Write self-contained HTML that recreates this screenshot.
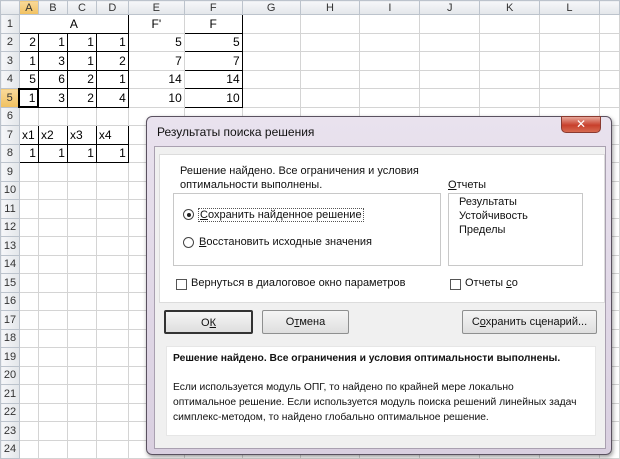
<!DOCTYPE html>
<html><head><meta charset="utf-8"><style>
*{box-sizing:border-box;margin:0;padding:0}
body{width:620px;height:459px;overflow:hidden;background:#fff;font-family:"Liberation Sans","DejaVu Sans",sans-serif;position:relative}
table{border-collapse:collapse;table-layout:fixed;position:absolute;left:0;top:0;font-size:12px}
td{border:1px solid #d4d4d4;height:18.5px;text-align:right;padding:0 2px;white-space:nowrap;overflow:hidden;line-height:16px}
tr.h td{background:linear-gradient(#f6f7f9,#e3e6ea);height:14px;text-align:center;color:#333;border-color:#bcc3cc;font-size:11px;line-height:12px}
td.r{background:linear-gradient(90deg,#f6f7f9,#e3e6ea);text-align:center;color:#333;border-color:#bcc3cc;font-size:11px}
td.sel{background:linear-gradient(#f9d99a,#f1c15f)!important}
.b{border:1px solid #000}
.l{text-align:left}
.c{text-align:center}
#dlg{position:absolute;left:146px;top:116px;width:466px;height:339px;border:1px solid #5a5160;border-radius:6px;background:linear-gradient(#e9e2ee,#d9cfe0);box-shadow:1px 2px 4px rgba(0,0,0,.4)}
#title{position:absolute;left:10px;top:8px;font-size:12px;color:#111}
#close{position:absolute;right:10px;top:-1px;width:40px;height:17px;border-radius:0 0 5px 5px;background:linear-gradient(#e8a79a,#c8402c 55%,#d66a50);border:1px solid #8a3a30;color:#fff;font-weight:bold;font-size:12px;text-align:center;line-height:15px}
#inner{position:absolute;left:7px;top:29px;width:452px;height:303px;background:#f0f0f0;border:1px solid #a9a0b0}
.panel{position:absolute;background:#fff;border:1px solid #dcdcdc}
.t{position:absolute;font-size:11px;color:#111;white-space:nowrap}
.box{position:absolute;border:1px solid #c8c8c8;background:#fff}
.btn{position:absolute;height:24px;border:1px solid #8e8f8f;border-radius:2px;background:linear-gradient(#f5f5f5,#dedede);font-size:11px;text-align:center;line-height:22px;color:#111}
.cb{position:absolute;width:11px;height:11px;border:1px solid #555;background:#fff}
.rd{position:absolute;width:11px;height:11px;border:1px solid #444;border-radius:50%;background:#fff}
</style></head><body>
<table>
<colgroup><col style="width:19px"><col style="width:19px"><col style="width:29px"><col style="width:29px"><col style="width:32px"><col style="width:56px"><col style="width:58px"><col style="width:58px"><col style="width:60px"><col style="width:60px"><col style="width:60px"><col style="width:60px"><col style="width:60px"><col style="width:20px"></colgroup>
<tr class="h"><td></td><td class="sel">A</td><td>B</td><td>C</td><td>D</td><td>E</td><td>F</td><td>G</td><td>H</td><td>I</td><td>J</td><td>K</td><td>L</td><td></td></tr>
<tr><td class="r">1</td><td colspan="4" class="b c">A</td><td class="c">F'</td><td class="b c">F</td><td></td><td></td><td></td><td></td><td></td><td></td><td></td></tr>
<tr><td class="r">2</td><td class="b">2</td><td class="b">1</td><td class="b">1</td><td class="b">1</td><td>5</td><td class="b">5</td><td></td><td></td><td></td><td></td><td></td><td></td><td></td></tr>
<tr><td class="r">3</td><td class="b">1</td><td class="b">3</td><td class="b">1</td><td class="b">2</td><td>7</td><td class="b">7</td><td></td><td></td><td></td><td></td><td></td><td></td><td></td></tr>
<tr><td class="r">4</td><td class="b">5</td><td class="b">6</td><td class="b">2</td><td class="b">1</td><td>14</td><td class="b">14</td><td></td><td></td><td></td><td></td><td></td><td></td><td></td></tr>
<tr><td class="r sel">5</td><td class="b" style="border-width:2px">1</td><td class="b">3</td><td class="b">2</td><td class="b">4</td><td>10</td><td class="b">10</td><td></td><td></td><td></td><td></td><td></td><td></td><td></td></tr>
<tr><td class="r">6</td><td></td><td></td><td></td><td></td><td></td><td></td><td></td><td></td><td></td><td></td><td></td><td></td><td></td></tr>
<tr><td class="r">7</td><td class="b l">x1</td><td class="b l">x2</td><td class="b l">x3</td><td class="b l">x4</td><td></td><td></td><td></td><td></td><td></td><td></td><td></td><td></td><td></td></tr>
<tr><td class="r">8</td><td class="b">1</td><td class="b">1</td><td class="b">1</td><td class="b">1</td><td></td><td></td><td></td><td></td><td></td><td></td><td></td><td></td><td></td></tr>
<tr><td class="r">9</td><td></td><td></td><td></td><td></td><td></td><td></td><td></td><td></td><td></td><td></td><td></td><td></td><td></td></tr>
<tr><td class="r">10</td><td></td><td></td><td></td><td></td><td></td><td></td><td></td><td></td><td></td><td></td><td></td><td></td><td></td></tr>
<tr><td class="r">11</td><td></td><td></td><td></td><td></td><td></td><td></td><td></td><td></td><td></td><td></td><td></td><td></td><td></td></tr>
<tr><td class="r">12</td><td></td><td></td><td></td><td></td><td></td><td></td><td></td><td></td><td></td><td></td><td></td><td></td><td></td></tr>
<tr><td class="r">13</td><td></td><td></td><td></td><td></td><td></td><td></td><td></td><td></td><td></td><td></td><td></td><td></td><td></td></tr>
<tr><td class="r">14</td><td></td><td></td><td></td><td></td><td></td><td></td><td></td><td></td><td></td><td></td><td></td><td></td><td></td></tr>
<tr><td class="r">15</td><td></td><td></td><td></td><td></td><td></td><td></td><td></td><td></td><td></td><td></td><td></td><td></td><td></td></tr>
<tr><td class="r">16</td><td></td><td></td><td></td><td></td><td></td><td></td><td></td><td></td><td></td><td></td><td></td><td></td><td></td></tr>
<tr><td class="r">17</td><td></td><td></td><td></td><td></td><td></td><td></td><td></td><td></td><td></td><td></td><td></td><td></td><td></td></tr>
<tr><td class="r">18</td><td></td><td></td><td></td><td></td><td></td><td></td><td></td><td></td><td></td><td></td><td></td><td></td><td></td></tr>
<tr><td class="r">19</td><td></td><td></td><td></td><td></td><td></td><td></td><td></td><td></td><td></td><td></td><td></td><td></td><td></td></tr>
<tr><td class="r">20</td><td></td><td></td><td></td><td></td><td></td><td></td><td></td><td></td><td></td><td></td><td></td><td></td><td></td></tr>
<tr><td class="r">21</td><td></td><td></td><td></td><td></td><td></td><td></td><td></td><td></td><td></td><td></td><td></td><td></td><td></td></tr>
<tr><td class="r">22</td><td></td><td></td><td></td><td></td><td></td><td></td><td></td><td></td><td></td><td></td><td></td><td></td><td></td></tr>
<tr><td class="r">23</td><td></td><td></td><td></td><td></td><td></td><td></td><td></td><td></td><td></td><td></td><td></td><td></td><td></td></tr>
<tr><td class="r">24</td><td></td><td></td><td></td><td></td><td></td><td></td><td></td><td></td><td></td><td></td><td></td><td></td><td></td></tr>
</table>

<div id="dlg">
<div id="title">Результаты поиска решения</div>
<div id="close">✕</div>
<div id="inner"></div>
<div class="panel" style="left:12px;top:37px;width:446px;height:149px"></div>
<div class="t" style="left:33px;top:48px">Решение найдено. Все ограничения и условия</div>
<div class="t" style="left:33px;top:62px">оптимальности выполнены.</div>
<div class="box" style="left:26px;top:76px;width:268px;height:73px"></div>
<div class="rd" style="left:36px;top:92px"><div style="position:absolute;left:2.5px;top:2.5px;width:4px;height:4px;border-radius:50%;background:#222"></div></div>
<div class="t" style="left:51px;top:91px;border:1px dotted #555;padding:0 1px"><u>С</u>охранить найденное решение</div>
<div class="rd" style="left:36px;top:120px"></div>
<div class="t" style="left:52px;top:119px"><u>В</u>осстановить исходные значения</div>
<div class="t" style="left:301px;top:62px"><u>О</u>тчеты</div>
<div class="box" style="left:301px;top:76px;width:135px;height:73px"></div>
<div class="t" style="left:312px;top:79px">Результаты</div>
<div class="t" style="left:312px;top:93px">Устойчивость</div>
<div class="t" style="left:312px;top:107px">Пределы</div>
<div class="cb" style="left:29px;top:162px"></div>
<div class="t" style="left:44px;top:160px">Вернуться в диалоговое окно параметров</div>
<div class="cb" style="left:303px;top:162px"></div>
<div class="t" style="left:318px;top:160px">Отчеты <u>с</u>о</div>
<div class="btn" style="left:17px;top:193px;width:89px;border:2px solid #333">О<u>К</u></div>
<div class="btn" style="left:115px;top:193px;width:87px">О<u>т</u>мена</div>
<div class="btn" style="left:315px;top:193px;width:135px">С<u>о</u>хранить сценарий...</div>
<div class="panel" style="left:19px;top:229px;width:430px;height:90px;border-color:#e6e6e6"></div>
<div class="t" style="left:26px;top:236px;font-weight:bold;font-size:10.3px">Решение найдено. Все ограничения и условия оптимальности выполнены.</div>
<div class="t" style="left:26px;top:265px;font-size:10.3px">Если используется модуль ОПГ, то найдено по крайней мере локально</div>
<div class="t" style="left:26px;top:280px;font-size:10.3px">оптимальное решение. Если используется модуль поиска решений линейных задач</div>
<div class="t" style="left:26px;top:295px;font-size:10.3px">симплекс-методом, то найдено глобально оптимальное решение.</div>
</div>
</body></html>
